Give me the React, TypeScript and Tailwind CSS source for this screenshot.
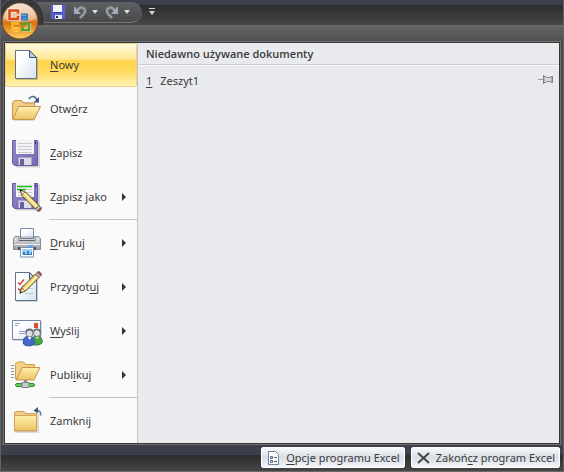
import React from 'react';

interface MenuEntry {
  id: string;
  before: string;
  hot: string;
  after: string;
  icon: React.ReactNode;
  submenu?: boolean;
  active?: boolean;
}

const Svg = ({ children }: { children: React.ReactNode }) => (
  <svg viewBox="0 0 32 32" className="h-8 w-8 shrink-0" fill="none" aria-hidden="true">
    {children}
  </svg>
);

const Page = () => (
  <>
    <path d="M5 2h15l7 7v22H5z" fill="#000" opacity=".18" />
    <path d="M4.5 1.5h14l7 7v21h-21z" fill="url(#paper)" stroke="#5f7491" />
    <path d="M18.500 1.500v7h7z" fill="#b9cce6" stroke="#44597a" />
  </>
);

const Pencil = () => (
  <>
    <path d="M9 9l5.500 2L28 24.500 24.500 28 11 14.500z" fill="#f5d978" stroke="#5d4a1c" />
    <path d="M13 12l13 13.500" stroke="#fff3b8" strokeWidth="1.500" />
    <path d="M9 9l5 2-3 3z" fill="#f7e2bd" stroke="#6a5628" strokeWidth=".7" />
    <path d="M8.500 8.500l2.600 1-1.600 1.600z" fill="#222" />
    <path d="M28 24.500L24.500 28l2 2 3.500-3.500z" fill="#b9bdc2" stroke="#5e6468" strokeWidth=".8" />
    <path d="M30 26.500L26.500 30c1 1.500 5-1.500 3.500-3.500z" fill="#c6504c" stroke="#7b3733" strokeWidth=".8" />
  </>
);

const Floppy = () => (
  <>
    <path d="M3 4.500h26v26H5z" fill="#000" opacity=".16" />
    <path d="M1.500 3.500h25v25h-23l-2-2z" fill="url(#violet)" stroke="#6a5aa6" />
    <path d="M5 3h18v14H5z" fill="#f4f4f6" />
    <path d="M7 6.500h14M7 9.500h14M7 12.500h14M7 15.500h14" stroke="#cbcbd0" />
    <path d="M24 5h1v2h-1z" fill="#372a69" />
    <path d="M7 20h14v8H7z" fill="#dcdde4" />
    <path d="M7.500 28v-7.500h13V28" stroke="#a79fca" />
    <path d="M9 22h4v6H9z" fill="#6b5fa0" />
  </>
);

const FolderOpen = () => (
  <>
    <path d="M2 26V9l2-2h7l2 2h11v5l5 1-6 13H3z" fill="#000" opacity=".12" />
    <path d="M1.500 26V9.500l2-2h7l2 2.500h11V26z" fill="#f2cd83" stroke="#c99449" />
    <path d="M7.500 13.500h22L23 26.500H2z" fill="url(#gold)" stroke="#c99449" />
    <path d="M8.500 14.500h19" stroke="#fff0bd" />
  </>
);

const IconNew = () => <Svg><Page /></Svg>;

const IconOpen = () => (
  <Svg>
    <FolderOpen />
    <path d="M18 6c2-3.500 6-3.500 8 1" stroke="#566f92" strokeWidth="1.600" />
    <path d="M28 4v5.500h-5.500z" fill="#3f5778" />
  </Svg>
);

const IconSave = () => <Svg><Floppy /></Svg>;

const IconSaveAs = () => (
  <Svg>
    <g transform="translate(0 -1)"><Floppy /></g>
    <path d="M6 5.500h15M6 8.500h9" stroke="#20b527" strokeWidth="1.500" />
    <Pencil />
  </Svg>
);

const IconPrint = () => (
  <Svg>
    <path d="M9.500 1.500h13v10h-13z" fill="url(#paper)" stroke="#7890ad" />
    <path d="M3 11l2-2h22l3 2v12H3z" fill="#000" opacity=".15" />
    <path d="M4 9.500h4v4h16v-4h3.500l2 2v11h-27v-11z" fill="url(#metal)" stroke="#8a8d91" />
    <path d="M8 13.500h16" stroke="#606368" />
    <path d="M3 17.500h26" stroke="#eeeff1" />
    <path d="M4.500 12v4M26.500 12v4" stroke="#fafafa" strokeDasharray="1 1" />
    <path d="M7 20h18v3H7z" fill="#4a4d52" />
    <path d="M9.500 20.500h13v9.500h-13z" fill="#fff" stroke="#7890ad" />
    <path d="M11 22h10v6H11z" fill="#9bd0f3" />
    <path d="M12 28v-3h2v2h2v-3h2v3h2v-2h1v3z" fill="#367fc4" />
    <path d="M17 18h5v2h-5z" fill="#58aaf4" />
  </Svg>
);

const IconPrepare = () => (
  <Svg>
    <Page />
    <path d="M14 12.500h8M14 17.500h8M14 22.500h8" stroke="#b8c5d6" />
    <path d="M7 11.500l2 2 4-5M7 17.500l2 2 4-5" stroke="#cf3e48" strokeWidth="1.500" />
    <g transform="matrix(1 0 0 -1 0 31)"><Pencil /></g>
  </Svg>
);

const IconSend = () => (
  <Svg>
    <path d="M2 6h29v20H2z" fill="#000" opacity=".15" />
    <path d="M1.500 5.500h28v19h-28z" fill="url(#paper)" stroke="#7087a6" />
    <path d="M4 8.500h5M4 10.500h3M8 16.500h10M8 18.500h8" stroke="#8aa6cc" />
    <path d="M23 8h4v5h-4z" fill="#d9512b" />
    <path d="M21 29c-1-6 2-8 5-8s6 3 5 7c-2 2-7 3-10 1z" fill="#4aa746" stroke="#2f7d33" />
    <path d="M12.500 29c-1-6 2-8 6-8s5 4 4.500 8c-2 2.500-8 2.500-10.500 0z" fill="#4569cb" stroke="#2f4f9c" />
    <circle cx="26" cy="18" r="3.500" fill="#dcdee0" stroke="#777b80" />
    <circle cx="18.500" cy="18.500" r="3.500" fill="#dcdee0" stroke="#777b80" />
    <path d="M15 17.500c0-4 6-4.500 7-1M23 16c1-3 6-2 6.500 1.500" stroke="#686c72" strokeWidth="1.500" />
    <path d="M17 22l1.500 3 2-3M25 22l1.500 2 1-2" fill="#fff" />
  </Svg>
);

const IconPublish = () => (
  <Svg>
    <path d="M0 6.500h3M0 9.500h3M0 12.500h3M0 15.500h3M0 18.500h3" stroke="#7d94b4" />
    <path d="M4.500 20V4.500l2-1.500h6l2 2.500h9V20z" fill="#f5d184" stroke="#cf9c50" />
    <path d="M11.500 8.500h17.500l-6 12.500H5z" fill="url(#gold)" stroke="#c99449" />
    <path d="M13 21v5h3v-5z" fill="#8a9096" />
    <rect x="4.500" y="24.500" width="19" height="3" rx="1.500" fill="#59cf56" stroke="#2e9136" />
    <path d="M11 23.500h7v5h-7z" fill="#c9cdd2" stroke="#7b8187" />
  </Svg>
);

const IconClose = () => (
  <Svg>
    <path d="M4 9h24v19H4z" fill="#000" opacity=".12" />
    <path d="M3.500 26V7.500l1.500-1h8l2 2h10.500V26z" fill="#eecb86" stroke="#c99b5c" />
    <path d="M3.500 10.500h22v15h-22z" fill="url(#gold)" stroke="#d3a457" />
    <path d="M26 5.500c3 0 4 2 3.500 5" stroke="#61738e" strokeWidth="1.600" />
    <path d="M22.500 5.500L27 2v6.500z" fill="#435675" />
  </Svg>
);

const SaveSmall = () => (
  <svg viewBox="0 0 14 14" className="h-3.5 w-3.5" aria-hidden="true">
    <path d="M0 0h14v14H1l-1-1z" fill="#5a61cf" />
    <path d="M2 0h9v7H2z" fill="#f1f3fd" />
    <path d="M2 7h9v1H2z" fill="#343b9d" />
    <path d="M4 10h7v4H4z" fill="#e5e8f5" />
    <path d="M5 11h2v2H5z" fill="#242a63" />
  </svg>
);

const Undo = ({ flip = false }: { flip?: boolean }) => (
  <svg viewBox="0 0 13 14" className={flip ? 'h-3.5 w-[13px] -scale-x-100' : 'h-3.5 w-[13px]'} fill="none" aria-hidden="true">
    <path d="M3 6c3-5 8-4 8 0 0 3-2 4-5 7" stroke="#969ca6" strokeWidth="2.500" />
    <path d="M0 1v8h7z" fill="#a5abb5" />
  </svg>
);

const Caret = () => (
  <svg viewBox="0 0 6 4" className="h-1 w-1.5" aria-hidden="true"><path d="M0 0h6L3 4z" fill="#dedede" /></svg>
);

const OfficeLogo = () => (
  <svg viewBox="0 0 38 38" className="h-[38px] w-[38px]" fill="none" aria-hidden="true">
    <circle cx="19" cy="19" r="18" fill="url(#orb)" stroke="#6e4a30" />
    <path d="M3 17a16 16 0 0 1 32 0c-9 4-23 4-32 0z" fill="#fff" opacity=".3" />
    <g stroke="#fff" strokeOpacity=".55" strokeWidth="4.500">
      <path d="M17 11V8.500H8.500v8.500h8.500v-2" />
      <path d="M12 27.500h6" />
      <path d="M21 27.500h7v-6" />
    </g>
    <path d="M17 11.500V8.500H8.500v8.500h8.500v-3" stroke="#dd4a12" strokeWidth="2.500" />
    <path d="M20 12.500h6v5h-5v-2.500h4" stroke="#2f7fce" strokeWidth="2" />
    <path d="M18 21.500h-6.500v6.500h6.500v-3" stroke="#f9b91b" strokeWidth="2.500" />
    <path d="M21.500 24v-2.500h6.500v6.500h-6.500v-3" stroke="#58a02c" strokeWidth="2.500" />
  </svg>
);

const Pin = () => (
  <svg viewBox="0 0 15 9" className="h-[9px] w-[15px]" fill="none" aria-hidden="true">
    <path d="M0 4.500h5" stroke="#999" />
    <path d="M5.500 0v9M14.500 1v7" stroke="#858585" />
    <path d="M6 1.500h2l1 1h3l2-1v6l-2-1H9l-1 1H6z" fill="#d8d8d8" stroke="#858585" />
  </svg>
);

const Defs = () => (
  <svg className="absolute h-0 w-0" aria-hidden="true">
    <defs>
      <linearGradient id="paper" x1="0" y1="0" x2="1" y2="1">
        <stop offset=".3" stopColor="#fff" /><stop offset="1" stopColor="#d4e1f2" />
      </linearGradient>
      <linearGradient id="gold" x1="0" y1="0" x2="0" y2="1">
        <stop stopColor="#fff0ab" /><stop offset="1" stopColor="#edc467" />
      </linearGradient>
      <linearGradient id="violet" x1="0" y1="0" x2="1" y2="1">
        <stop stopColor="#9488c8" /><stop offset="1" stopColor="#7566b4" />
      </linearGradient>
      <linearGradient id="metal" x1="0" y1="0" x2="0" y2="1">
        <stop stopColor="#dddfe1" /><stop offset="1" stopColor="#9a9da2" />
      </linearGradient>
      <linearGradient id="orb" x1="0" y1="0" x2="0" y2="1">
        <stop stopColor="#f0dcc8" /><stop offset=".4" stopColor="#e5a468" />
        <stop offset=".55" stopColor="#d9730f" /><stop offset="1" stopColor="#ffd060" />
      </linearGradient>
    </defs>
  </svg>
);

const groups: MenuEntry[][] = [
  [
    { id: 'new', before: '', hot: 'N', after: 'owy', icon: <IconNew />, active: true },
    { id: 'open', before: 'Otw', hot: 'ó', after: 'rz', icon: <IconOpen /> },
    { id: 'save', before: '', hot: 'Z', after: 'apisz', icon: <IconSave /> },
    { id: 'saveas', before: 'Z', hot: 'a', after: 'pisz jako', icon: <IconSaveAs />, submenu: true },
  ],
  [
    { id: 'print', before: '', hot: 'D', after: 'rukuj', icon: <IconPrint />, submenu: true },
    { id: 'prepare', before: 'Przygot', hot: 'u', after: 'j', icon: <IconPrepare />, submenu: true },
    { id: 'send', before: '', hot: 'W', after: 'yślij', icon: <IconSend />, submenu: true },
    { id: 'publish', before: 'Publ', hot: 'i', after: 'kuj', icon: <IconPublish />, submenu: true },
  ],
  [{ id: 'close', before: 'Zamknij', hot: '', after: '', icon: <IconClose /> }],
];

const MenuButton = ({ entry }: { entry: MenuEntry }) => (
  <button
    className={
      entry.active
        ? 'flex h-11 w-full items-center rounded-xs border border-[#ecd08c] bg-[linear-gradient(to_bottom,#fffbdc,#ffe793_36%,#ffd348_40%,#ffda60_65%,#fff3b0)] pr-2.5 pl-[5px] text-left'
        : 'flex h-11 w-full items-center border border-transparent pr-2.5 pl-[5px] text-left'
    }
  >
    {entry.icon}
    <span className="ml-[7px] flex-1">
      {entry.before}<span className="underline underline-offset-2">{entry.hot}</span>{entry.after}
    </span>
    {entry.submenu && (
      <svg viewBox="0 0 4 8" className="h-2 w-1" aria-hidden="true"><path d="M0 0v8l4-4z" fill="#333" /></svg>
    )}
  </button>
);

export default function App() {
  return (
    <div className="relative flex min-h-screen w-full flex-col border-x border-[#636363] bg-[#4c4c4d] font-['Noto_Sans','Open_Sans',sans-serif] text-[11px] leading-4 text-[#3b3b3b]">
      <Defs />

      {/* Title bar with quick access */}
      <header className="relative flex h-[26px] items-start overflow-hidden border-b border-[#6a6a6a] bg-linear-to-b from-[#3d3f4d] from-20% via-[#2e2e2e] via-20% to-[#464646] pt-0.5 pl-[34px]">
        <div className="flex h-[21px] items-center rounded-r-full border-b border-[#777] bg-linear-to-b from-[#5f6063] to-[#48494b] pr-3 pl-4">
          <button aria-label="Zapisz"><SaveSmall /></button>
          <button aria-label="Cofnij" className="ml-[9px]"><Undo /></button>
          <button aria-label="Lista cofania" className="ml-[5px]"><Caret /></button>
          <button aria-label="Ponów" className="ml-[7px]"><Undo flip /></button>
          <button aria-label="Lista ponawiania" className="ml-[6px]"><Caret /></button>
        </div>
        <button aria-label="Dostosuj" className="mt-1.5 ml-[7px]">
          <svg viewBox="0 0 6 7" className="h-[7px] w-1.5" aria-hidden="true"><path d="M0 0h6v1H0zM0 3h6L3 7z" fill="#d5d5d5" /></svg>
        </button>
        {/* dark recess around the round button */}
        <span className="absolute -top-1 -left-1 h-12 w-12 rounded-full border border-[#5c5c5c] bg-[#38383a]" />
      </header>
      <button aria-label="Przycisk pakietu Office" className="absolute top-[2px] left-0"><OfficeLogo /></button>

      <div className="h-[15px] bg-linear-to-b from-[#656565] to-[#505050]" />

      <main className="mx-0.5 flex flex-1 border border-[#707070]">
        <div className="flex flex-1 border border-[#383838]">
          <nav className="w-[133px] shrink-0 border-r border-[#c5c5c5] bg-[#fafafa]">
            {groups.map((group, i) => (
              <div key={group[0].id}>
                {i > 0 && <div className="ml-11 h-0.5 border-t border-[#c5c5c5]" />}
                {group.map(entry => <MenuButton key={entry.id} entry={entry} />)}
              </div>
            ))}
          </nav>
          <section className="min-w-0 flex-1 bg-[#e9eaee]">
            <h2 className="border-b border-[#cfcfcf] px-2 pt-[3px] pb-[2px] font-['Open_Sans','Noto_Sans',sans-serif] font-semibold shadow-[0_1px_0_#f8f8f8]">
              Niedawno używane dokumenty
            </h2>
            <div className="flex items-start pt-2 pr-1.5 pl-2">
              <a href="#zeszyt1" className="flex-1"><span className="mr-2 underline underline-offset-2">1</span>Zeszyt1</a>
              <button aria-label="Przypnij" className="pt-0.5"><Pin /></button>
            </div>
          </section>
        </div>
      </main>

      <footer className="flex h-[27px] justify-end gap-1.5 border-b border-[#6a6a6a] bg-linear-to-b from-[#3d3f4d] from-40% via-[#2e2e2e] via-40% to-[#464646] px-[3px] pt-0.5 pb-[3px]">
        <button className="flex items-center gap-1.5 rounded-xs border border-white bg-linear-to-b from-[#f6f8fa] via-[#d9dee6] to-[#f2f5f9] pr-1 pl-[5px]">
          <svg viewBox="0 0 13 14" className="h-3.5 w-[13px]" fill="none" aria-hidden="true">
            <path d="M1.500.5h7l3 3v10h-10z" fill="#fff" stroke="#6b84a4" />
            <path d="M3.500 5.500h2v2h-2zM3.500 9.500h2v2h-2z" stroke="#4b6286" /><path d="M7 6.500h3M7 10.500h3" stroke="#555" />
          </svg>
          <span><span className="underline underline-offset-2">O</span>pcje programu Excel</span>
        </button>
        <button className="flex items-center gap-1.5 rounded-xs border border-white bg-linear-to-b from-[#f6f8fa] via-[#d9dee6] to-[#f2f5f9] pr-1 pl-[5px]">
          <svg viewBox="0 0 13 12" className="h-3 w-[13px]" aria-hidden="true"><path d="M1 1l11 10M12 1L1 11" stroke="#444" strokeWidth="2" /></svg>
          <span>Zakoń<span className="underline underline-offset-2">c</span>z program Excel</span>
        </button>
      </footer>
    </div>
  );
}
